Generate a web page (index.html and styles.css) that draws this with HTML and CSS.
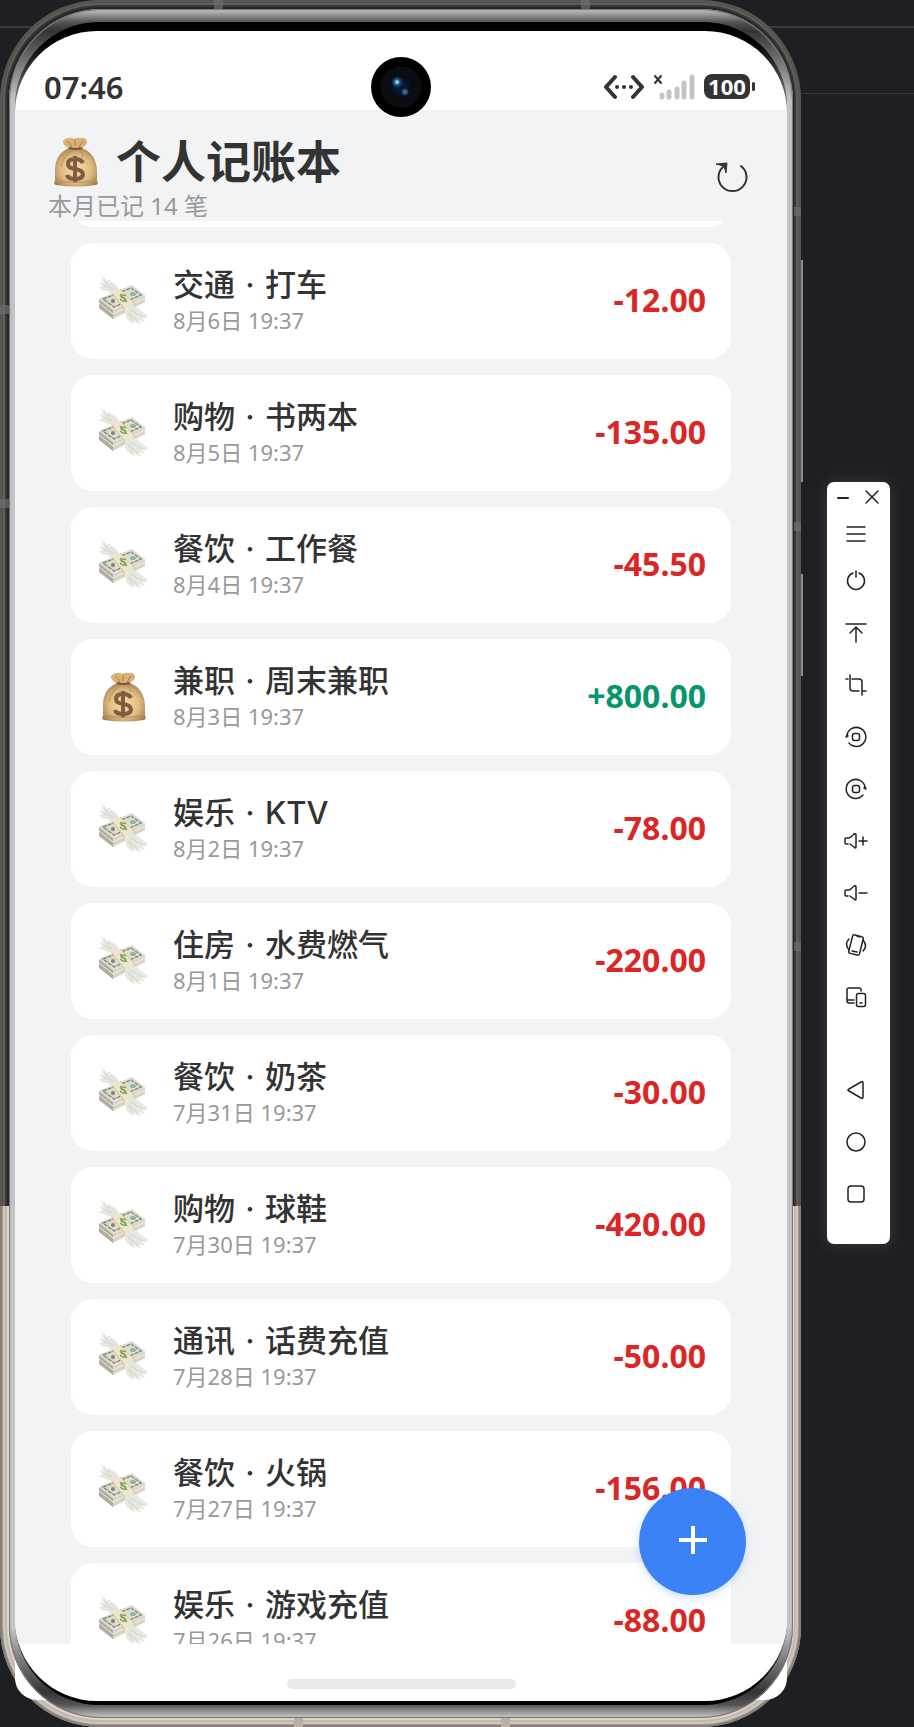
FILE: index.html
```html
<!DOCTYPE html>
<html lang="zh-CN">
<head>
    <meta charset="UTF-8">
    <meta name="viewport" content="width=device-width, initial-scale=1.0">
    <title>个人记账本</title>
    <link rel="stylesheet" href="styles.css">
</head>
<body>
    <!-- shared icons -->
    <svg class="defs" aria-hidden="true">
        <defs>
            <radialGradient id="bagFill" cx="50%" cy="55%" r="60%">
                <stop offset="0" stop-color="#fbdda2"/>
                <stop offset="0.6" stop-color="#dfbb82"/>
                <stop offset="1" stop-color="#a07b4e"/>
            </radialGradient>
            <linearGradient id="billFill" x1="0" y1="0" x2="1" y2="1">
                <stop offset="0" stop-color="#d3d2c4"/>
                <stop offset="1" stop-color="#e9e7da"/>
            </linearGradient>
        </defs>
        <symbol id="bag" viewBox="0 0 44 50">
            <path d="M9 5C9 2 13 1 15 1Q18 0 20 2Q23 0 26 1Q32 0 33 4Q34 7 29 10L27 13H16L14 11Q9 8 9 5Z" fill="#d9b27a"/>
            <path d="M13 4Q17 6 18 11M30 4Q26 6 25 11M21 3L21 9" fill="none" stroke="#a57e4e" stroke-width="1"/>
            <path d="M15 11H28Q43 17 43 35V44Q45 47 42 48Q22 51 2 48Q-1 47 1 44V33Q1 17 15 11Z" fill="url(#bagFill)"/>
            <path d="M15 11Q22 13 28 11" fill="none" stroke="#80562f" stroke-width="2"/>
            <path d="M17 14Q9 20 7 30M26 14Q29 18 29 20M2 44Q22 47 42 44" fill="none" stroke="#ba9058" stroke-width="1"/>
            <path d="M29 26Q27 22 21 22Q14 22 14 27Q14 31 21 32Q29 33 29 38Q28 42 21 42Q14 42 13 38M21 19V45" fill="none" stroke="#815b42" stroke-width="4"/>
        </symbol>
        <symbol id="cash" viewBox="0 0 50 50">
            <path d="M21 15Q18 7 12 6L9 3L9 6L3 0Q3 5 5 7L1 6Q1 9 5 10L0 11Q3 15 7 15L13 18Z" fill="#e6e8e1"/>
            <path d="M5 3L12 12M4 9L14 14M12 7L17 14" fill="none" stroke="#d3d7ce" stroke-width="1"/>
            <path d="M0 23V32L14 43V34Z" fill="#b3aa9b"/>
            <path d="M14 34V43L46 26V19Z" fill="#d9d4c9"/>
            <path d="M0 27L14 38L46 22" fill="none" stroke="#f3f0e8" stroke-width="1"/>
            <path d="M0 23L33 9L46 19L14 34Z" fill="url(#billFill)"/>
            <path d="M4 23L32 12L42 19L15 31Z" fill="none" stroke="#8a9086" stroke-width="1.5" stroke-dasharray="4 1"/>
            <ellipse cx="14" cy="25" rx="2" ry="2" fill="#7b827c"/>
            <ellipse cx="34" cy="18" rx="3" ry="2" fill="#86b9a3"/>
            <path d="M13 17L21 13L35 27V33L25 37V32Z" fill="#ebe5d1"/>
            <path d="M13 17L25 32V37M21 13L35 27V33" fill="none" stroke="#e5c56c" stroke-width="1"/>
            <path d="M27 20Q24 18 22 20Q22 22 25 22Q28 23 26 25Q24 26 21 23M21 18L28 26" fill="none" stroke="#7aa95c" stroke-width="1.5"/>
            <path d="M27 31Q36 28 41 34L49 40Q47 43 43 42L46 45Q42 46 39 43L42 48Q38 48 35 45L36 48Q29 46 27 41Q25 37 27 31Z" fill="#e6e8e1"/>
            <path d="M31 34Q36 37 44 41M30 36Q33 41 40 46M29 38L34 45" fill="none" stroke="#d0d4ca" stroke-width="1"/>
        </symbol>
    </svg>

    <main class="phone">
        <span class="mark mark-t1"></span><span class="mark mark-t2"></span>
        <span class="mark mark-b1"></span><span class="mark mark-b2"></span>
        <span class="mark mark-l1"></span><span class="mark mark-l2"></span>
        <span class="mark mark-r1"></span><span class="mark mark-r2"></span><span class="mark mark-r3"></span>
        <span class="side-key key-volume"></span>
        <span class="side-key key-power"></span>
        <div class="bezel">
            <div class="glass">
                <div class="screen">
                    <div class="status">
                        <span class="time">07:46</span>
                        <div class="status-icons">
                            <svg width="40" height="26" viewBox="0 0 40 26" fill="none" stroke="#333" stroke-width="4" stroke-linecap="round" stroke-linejoin="round">
                                <path d="M11 3L2 13L11 23M29 3L38 13L29 23"/>
                                <path d="M13 13H13.01M20 13H20.01M27 13H27.01"/>
                            </svg>
                            <svg width="42" height="26" viewBox="0 0 42 26" fill="none" stroke-linecap="round">
                                <path d="M2 2L8 9M8 2L2 9" stroke="#333" stroke-width="2"/>
                                <path d="M9 21V23M16 18V23M24 15V23M31 9V23M39 3V23" stroke="#c4c4c4" stroke-width="5"/>
                            </svg>
                            <span class="battery">100</span>
                        </div>
                    </div>

                    <span class="camera"></span>

                    <header class="header">
                        <div>
                            <h1><svg class="title-icon"><use href="#bag"/></svg>个人记账本</h1>
                            <p>本月已记 14 笔</p>
                        </div>
                        <button class="refresh" type="button" aria-label="刷新">
                            <svg width="34" height="32" viewBox="0 0 34 32" fill="none" stroke="#333" stroke-width="2">
                                <path d="M26 4A14 14 0 1 1 9 4" stroke-linecap="round"/>
                                <path d="M1 2L12 1L11 11L9 4Z" fill="#333" stroke-width="1" stroke-linejoin="round"/>
                            </svg>
                        </button>
                    </header>

                    <section class="records">
                        <ul class="list">
                            <li class="card card-passed"></li>
                            <li class="card">
                                <svg class="card-icon"><use href="#cash"/></svg>
                                <div class="info"><h2>交通 <span class="dot">·</span> 打车</h2><time>8月6日 19:37</time></div>
                                <span class="amount">-12.00</span>
                            </li>
                            <li class="card">
                                <svg class="card-icon"><use href="#cash"/></svg>
                                <div class="info"><h2>购物 <span class="dot">·</span> 书两本</h2><time>8月5日 19:37</time></div>
                                <span class="amount">-135.00</span>
                            </li>
                            <li class="card">
                                <svg class="card-icon"><use href="#cash"/></svg>
                                <div class="info"><h2>餐饮 <span class="dot">·</span> 工作餐</h2><time>8月4日 19:37</time></div>
                                <span class="amount">-45.50</span>
                            </li>
                            <li class="card">
                                <svg class="card-icon"><use href="#bag"/></svg>
                                <div class="info"><h2>兼职 <span class="dot">·</span> 周末兼职</h2><time>8月3日 19:37</time></div>
                                <span class="amount income">+800.00</span>
                            </li>
                            <li class="card">
                                <svg class="card-icon"><use href="#cash"/></svg>
                                <div class="info"><h2>娱乐 <span class="dot">·</span> KTV</h2><time>8月2日 19:37</time></div>
                                <span class="amount">-78.00</span>
                            </li>
                            <li class="card">
                                <svg class="card-icon"><use href="#cash"/></svg>
                                <div class="info"><h2>住房 <span class="dot">·</span> 水费燃气</h2><time>8月1日 19:37</time></div>
                                <span class="amount">-220.00</span>
                            </li>
                            <li class="card">
                                <svg class="card-icon"><use href="#cash"/></svg>
                                <div class="info"><h2>餐饮 <span class="dot">·</span> 奶茶</h2><time>7月31日 19:37</time></div>
                                <span class="amount">-30.00</span>
                            </li>
                            <li class="card">
                                <svg class="card-icon"><use href="#cash"/></svg>
                                <div class="info"><h2>购物 <span class="dot">·</span> 球鞋</h2><time>7月30日 19:37</time></div>
                                <span class="amount">-420.00</span>
                            </li>
                            <li class="card">
                                <svg class="card-icon"><use href="#cash"/></svg>
                                <div class="info"><h2>通讯 <span class="dot">·</span> 话费充值</h2><time>7月28日 19:37</time></div>
                                <span class="amount">-50.00</span>
                            </li>
                            <li class="card">
                                <svg class="card-icon"><use href="#cash"/></svg>
                                <div class="info"><h2>餐饮 <span class="dot">·</span> 火锅</h2><time>7月27日 19:37</time></div>
                                <span class="amount">-156.00</span>
                            </li>
                            <li class="card">
                                <svg class="card-icon"><use href="#cash"/></svg>
                                <div class="info"><h2>娱乐 <span class="dot">·</span> 游戏充值</h2><time>7月26日 19:37</time></div>
                                <span class="amount">-88.00</span>
                            </li>
                        </ul>
                        <button class="fab" type="button" aria-label="记一笔">
                            <svg width="28" height="28" viewBox="0 0 28 28" stroke="#fff" stroke-width="4"><path d="M0 14H28M14 0V28"/></svg>
                        </button>
                    </section>

                    <div class="nav-area"><span class="home-bar"></span></div>
                </div>
            </div>
        </div>
    </main>

    <aside class="toolbar">
        <div class="window-buttons">
            <button type="button" aria-label="最小化"><svg width="12" height="14" viewBox="0 0 12 14"><path d="M1 8H11" stroke-width="2"/></svg></button>
            <button type="button" aria-label="关闭"><svg width="14" height="14" viewBox="0 0 14 14"><path d="M1 1L13 13M13 1L1 13"/></svg></button>
        </div>
        <button class="menu" type="button" aria-label="菜单"><svg class="tool" viewBox="0 0 22 22"><path d="M2 4H20M2 11H20M2 18H20"/></svg></button>
        <button type="button" aria-label="电源"><svg class="tool" viewBox="0 0 22 22"><path d="M8 3A8.500 8.500 0 1 0 14 3M11 1V7"/></svg></button>
        <button type="button" aria-label="上滑"><svg class="tool" viewBox="0 0 22 22"><path d="M1 2H21M11 20V6M5 11L11 5L17 11"/></svg></button>
        <button type="button" aria-label="截屏"><svg class="tool" viewBox="0 0 22 22"><path d="M1 5H3M7 5H14Q17 5 17 8V21M5 1V14Q5 17 8 17H14M18 17H21"/></svg></button>
        <button type="button" aria-label="向左旋转"><svg class="tool" viewBox="0 0 22 22"><path d="M2 9A9.500 9.500 0 1 1 4 17"/><path d="M1 11L2 9L3 10Z"/><rect x="7.500" y="7.500" width="7" height="7" rx="2"/></svg></button>
        <button type="button" aria-label="向右旋转"><svg class="tool" viewBox="0 0 22 22"><path d="M20 9A9.500 9.500 0 1 0 18 17"/><path d="M21 11L20 9L19 10Z"/><rect x="7.500" y="7.500" width="7" height="7" rx="2"/></svg></button>
        <button type="button" aria-label="音量加"><svg class="tool" viewBox="0 0 22 22"><path d="M3 14H1Q0 14 0 13V9Q0 8 1 8H4Q5 8 9 4Q11 3 11 5V17Q11 19 9 17L5 14M14 11H22M18 7V15"/></svg></button>
        <button type="button" aria-label="音量减"><svg class="tool" viewBox="0 0 22 22"><path d="M3 14H1Q0 14 0 13V9Q0 8 1 8H4Q5 8 9 4Q11 3 11 5V17Q11 19 9 17L5 14M14 11H22"/></svg></button>
        <button type="button" aria-label="摇一摇"><svg class="tool" viewBox="0 0 22 22"><rect x="5.500" y="1.500" width="11" height="19" rx="2" transform="rotate(14 11 11)"/><path d="M7 17L12 18M12 2L15 3M4 5Q-1 10 4 16M18 6Q23 12 18 17"/></svg></button>
        <button type="button" aria-label="多设备"><svg class="tool" viewBox="0 0 22 22"><path d="M16 5V4Q16 2 14 2H4Q2 2 2 4V15Q2 17 4 17H9M2 14H9"/><rect x="11.500" y="7.500" width="9" height="13" rx="2"/><path d="M15 17H17"/></svg></button>
        <button class="back" type="button" aria-label="返回"><svg class="tool" viewBox="0 0 22 22"><path d="M4 10L16 3Q18 2 18 4V18Q18 20 16 19L4 12Q2 11 4 10Z"/></svg></button>
        <button type="button" aria-label="主屏幕"><svg class="tool" viewBox="0 0 22 22"><circle cx="11" cy="11" r="9"/></svg></button>
        <button type="button" aria-label="最近任务"><svg class="tool" viewBox="0 0 22 22"><rect x="3" y="3" width="16" height="16" rx="3"/></svg></button>
    </aside>
</body>
</html>
```

FILE: styles.css
```css
* {
    box-sizing: border-box;
}
body {
    margin: 0;
    padding-right: 24px;
    min-height: 100vh;
    display: flex;
    align-items: flex-start;
    gap: 26px;
    overflow: hidden;
    font-family: "Noto Sans", "Noto Sans CJK SC", sans-serif;
    color: #333;
    background:
        linear-gradient(#3a3b3f, #3a3b3f) 0 26px / 100% 2px no-repeat,
        linear-gradient(#36373b, #36373b) 100% 93px / 50% 1px no-repeat,
        #1e1f23;
}
h1, h2, p, ul {
    margin: 0;
    padding: 0;
}
button {
    display: flex;
    align-items: center;
    justify-content: center;
    padding: 0;
    border: none;
    background: none;
    cursor: pointer;
}
.defs {
    position: absolute;
    width: 0;
    height: 0;
}

/* phone body */
.phone {
    position: relative;
    z-index: 0;
    flex: 1;
    height: 100vh;
    padding: 9px 8px 9px 9px;
    border-radius: 100px;
    background: linear-gradient(#262626 0 1206px, #ddd5c8 1206px);
    box-shadow:
        inset 0 0 0 2px rgba(95, 90, 80, 0.4),
        inset 0 0 0 3px rgba(60, 55, 50, 0.3),
        inset 0 0 0 5px rgba(255, 255, 255, 0.2),
        inset 0 0 0 7px rgba(110, 105, 95, 0.25);
}
.phone::before {
    content: "";
    position: absolute;
    z-index: -1;
    left: 15px;
    right: 14px;
    bottom: 27px;
    height: 100px;
    border-radius: 0 0 22px 22px;
    background: #fff;
}
.bezel {
    height: 100%;
    padding: 13px 6px;
    border-radius: 92px;
    background: linear-gradient(#c8c8c8, #555 13px, #333 22px, #c4c4c4 90px, #c4c4c4 calc(100% - 90px), #333 calc(100% - 26px), #555 calc(100% - 13px), #d0d0d0);
    box-shadow: inset 0 0 0 1px #777, inset 0 0 3px #888;
}
.glass {
    height: 100%;
    padding: 9px 0 4px;
    border-radius: 84px;
    background: linear-gradient(#000 20px, #777 80px, #777 calc(100% - 80px), #000 calc(100% - 20px));
}
.mark {
    position: absolute;
    width: 9px;
    height: 9px;
    background: rgba(110, 110, 110, 0.7);
}
.mark-t1 { top: 0; left: 214px; }
.mark-t2 { top: 0; right: 211px; }
.mark-b1, .mark-b2 { bottom: 0; background: #b9b1a3; }
.mark-b1 { left: 294px; }
.mark-b2 { right: 291px; }
.mark-l1 { left: 0; top: 305px; }
.mark-l2 { left: 0; top: 499px; }
.mark-r1 { right: 0; top: 207px; width: 7px; }
.mark-r2 { right: 0; top: 522px; width: 7px; }
.mark-r3 { right: 0; top: 942px; width: 7px; }
.side-key {
    position: absolute;
    right: -2px;
    width: 2px;
    background: #8d8d8d;
}
.key-volume {
    top: 260px;
    height: 222px;
}
.key-power {
    top: 574px;
    height: 102px;
}

/* screen */
.screen {
    position: relative;
    height: 100%;
    display: flex;
    flex-direction: column;
    overflow: hidden;
    border-radius: 82px;
    background: #fff;
}
.status {
    flex: none;
    height: 79px;
    padding: 32px 37px 0 29px;
    display: flex;
    align-items: center;
    justify-content: space-between;
}
.time {
    font-size: 31px;
    font-weight: 600;
}
.status-icons {
    display: flex;
    align-items: center;
    gap: 9px;
}
.battery {
    position: relative;
    width: 46px;
    border-radius: 8px;
    background: #333;
    color: #fff;
    font-size: 22px;
    font-weight: 700;
    line-height: 25px;
    text-align: center;
}
.battery::after {
    content: "";
    position: absolute;
    right: -5px;
    top: 8px;
    width: 3px;
    height: 9px;
    border-radius: 2px;
    background: #333;
}
.camera {
    position: absolute;
    z-index: 2;
    top: 26px;
    left: 50%;
    width: 60px;
    height: 60px;
    margin-left: -30px;
    border-radius: 50%;
    background:
        radial-gradient(circle at 26px 25px, #8fd0ee 0 1px, rgba(50, 110, 170, 0.6) 3px, transparent 6px),
        radial-gradient(circle at 34px 35px, #3c6ea8 0 1px, transparent 4px),
        radial-gradient(circle at 30px 30px, #0a1a33 0 5px, #080c14 10px, #0b0c0e 18px, #0e0e0e 20px, #000 21px);
}
.header {
    flex: none;
    padding: 23px 38px 0 33px;
    display: flex;
    justify-content: space-between;
    background: #f2f3f5;
}
.header h1 {
    display: flex;
    align-items: center;
    gap: 17px;
    font-size: 45px;
    font-weight: 700;
    line-height: 57px;
}
.title-icon {
    width: 46px;
    height: 50px;
    margin-left: 5px;
}
.header p {
    color: #999;
    font-size: 24px;
    line-height: 31px;
}
.refresh {
    align-self: flex-start;
    margin-top: 29px;
}
.records {
    position: relative;
    flex: 1;
    min-height: 0;
    background: #f2f3f5;
}
.list {
    height: 100%;
    padding: 0 56px;
    display: flex;
    flex-direction: column;
    gap: 16px;
    overflow: hidden;
    list-style: none;
}
.card {
    flex: none;
    height: 116px;
    padding: 0 25px 0 28px;
    display: flex;
    align-items: center;
    gap: 24px;
    border-radius: 22px;
    background: #fff;
}
/* already scrolled under the header */
.card-passed {
    margin-top: -110px;
}
.card-icon {
    width: 50px;
    height: 50px;
}
.info {
    flex: 1;
}
.info h2 {
    font-family: "Inter", "Noto Sans CJK SC", sans-serif;
    font-size: 31px;
    font-weight: 500;
    line-height: 38px;
}
.dot {
    margin: 0 2px;
}
.info time {
    display: block;
    color: #999;
    font-size: 22px;
    line-height: 32px;
}
.amount {
    padding-bottom: 4px;
    color: #dc2626;
    font-size: 32px;
    font-weight: 700;
}
.income {
    color: #059669;
}
.fab {
    position: absolute;
    right: 41px;
    bottom: 49px;
    width: 107px;
    height: 107px;
    padding-bottom: 3px;
    border-radius: 50%;
    background: #3b82f6;
    box-shadow: 0 3px 8px rgba(59, 130, 246, 0.25);
}
.nav-area {
    flex: none;
    height: 57px;
    display: flex;
    justify-content: center;
    padding-top: 35px;
}
.home-bar {
    width: 229px;
    height: 10px;
    border-radius: 5px;
    background: #e9e9e9;
}

/* emulator toolbar */
.toolbar {
    width: 63px;
    margin-top: 482px;
    padding-bottom: 24px;
    display: flex;
    flex-direction: column;
    border-radius: 7px;
    background: #fff;
    box-shadow: 0 0 16px rgba(255, 255, 255, 0.12);
}
.toolbar button {
    height: 52px;
    padding-right: 5px;
}
.toolbar svg {
    fill: none;
    stroke: #222;
    stroke-width: 1.5;
    stroke-linecap: round;
    stroke-linejoin: round;
    overflow: visible;
}
.tool {
    width: 22px;
    height: 22px;
}
.window-buttons {
    height: 30px;
    padding: 0 11px 0 10px;
    display: flex;
    justify-content: space-between;
}
.toolbar .window-buttons button {
    height: 30px;
    padding: 0;
}
.toolbar .menu {
    height: 43px;
}
.toolbar .back {
    margin-top: 41px;
}
```
